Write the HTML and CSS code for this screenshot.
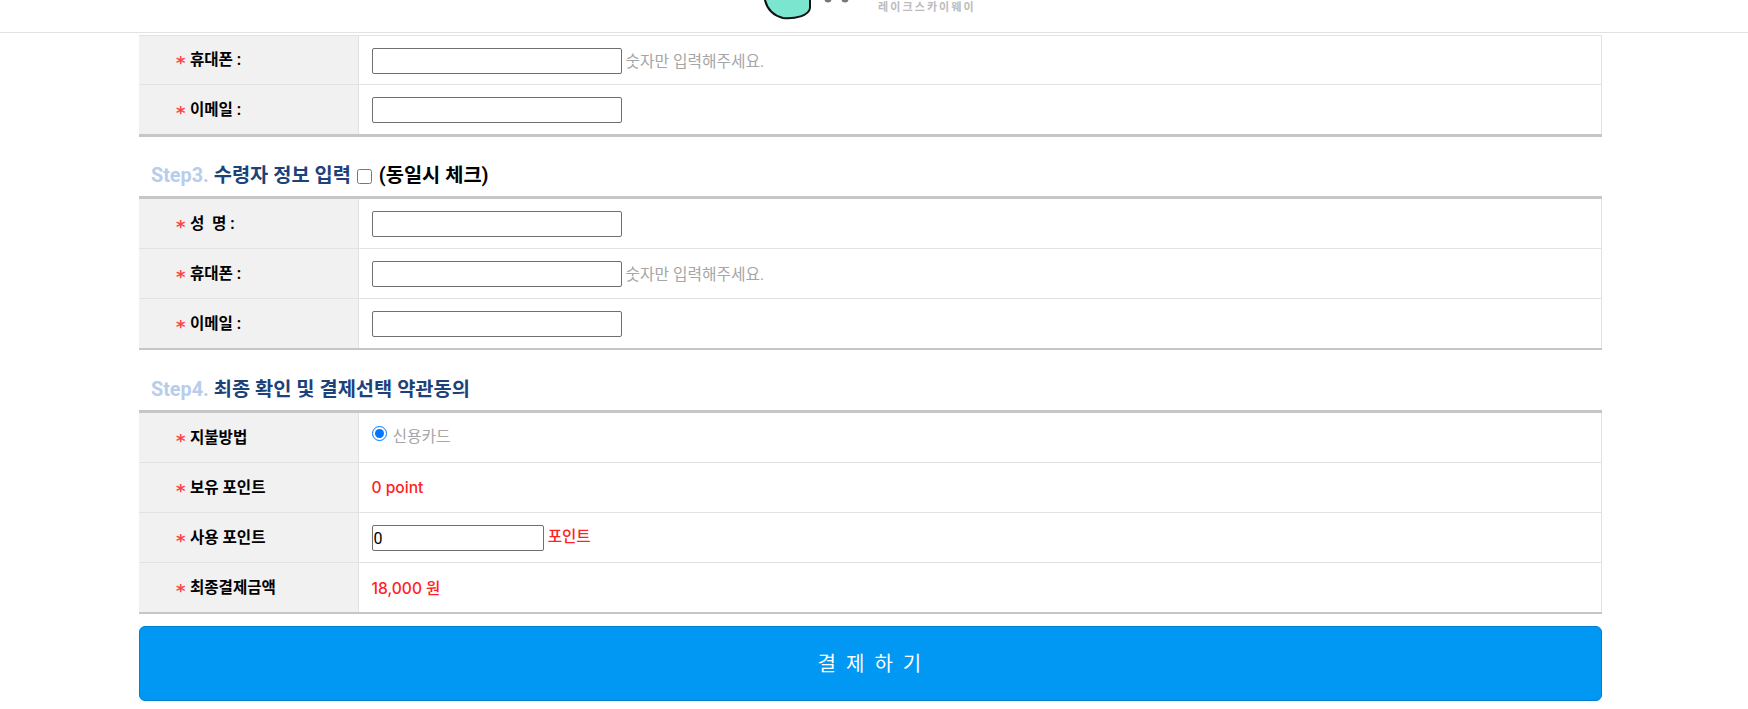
FILE: index.html
```html
<!DOCTYPE html>
<html lang="ko">
<head>
    <meta charset="UTF-8">
    <meta name="viewport" content="width=device-width, initial-scale=1.0">
    <title>결제하기</title>
    <link rel="stylesheet" href="styles.css">
</head>
<body>

<header class="top">
    <svg class="logo" width="100" height="20" viewBox="0 0 100 20">
        <path d="M1 -6 C2 6 8 15 20 18 C32 19 46 16 47 8 L47 -6 Z" fill="#7be5cf" stroke="#111" stroke-width="2"/>
        <circle cx="65" cy="-1" r="3.5" fill="#777"/>
        <circle cx="82" cy="-1" r="3.5" fill="#777"/>
    </svg>
    <span class="brand">레이크스카이웨이</span>
</header>

<div class="container">
    <table class="form">
        <tr>
            <th><span class="req">*</span> 휴대폰 :</th>
            <td><input type="text" class="field"> <span class="hint">숫자만 입력해주세요.</span></td>
        </tr>
        <tr>
            <th><span class="req">*</span> 이메일 :</th>
            <td><input type="text" class="field"></td>
        </tr>
    </table>

    <h2 class="step"><span class="num">Step3.</span> 수령자 정보 입력 <input type="checkbox" class="same"> <span class="same-label">(동일시 체크)</span></h2>
    <table class="form">
        <tr>
            <th><span class="req">*</span> 성 &nbsp;명 :</th>
            <td><input type="text" class="field"></td>
        </tr>
        <tr>
            <th><span class="req">*</span> 휴대폰 :</th>
            <td><input type="text" class="field"> <span class="hint">숫자만 입력해주세요.</span></td>
        </tr>
        <tr>
            <th><span class="req">*</span> 이메일 :</th>
            <td><input type="text" class="field"></td>
        </tr>
    </table>

    <h2 class="step"><span class="num">Step4.</span> 최종 확인 및 결제선택 약관동의</h2>
    <table class="form">
        <tr>
            <th><span class="req">*</span> 지불방법</th>
            <td class="pay-cell"><input type="radio" class="pay" name="pay" checked> <span class="hint">신용카드</span></td>
        </tr>
        <tr>
            <th><span class="req">*</span> 보유 포인트</th>
            <td class="red">0 point</td>
        </tr>
        <tr>
            <th><span class="req">*</span> 사용 포인트</th>
            <td class="red"><input type="text" class="field point" value="0"> 포인트</td>
        </tr>
        <tr>
            <th><span class="req">*</span> 최종결제금액</th>
            <td class="red">18,000 원</td>
        </tr>
    </table>

    <button class="pay-btn">결 제 하 기</button>
</div>

</body>
</html>
```

FILE: styles.css
```css
html, body {
    height: 709px;
    overflow: hidden;
}
body {
    margin: 0;
    background-color: #fff;
    font-family: Roboto, "Noto Sans CJK KR", sans-serif;
    font-size: 15.6px;
    color: #000;
}
.top {
    height: 32px;
    border-bottom: 1px solid #e2e2e6;
    display: flex;
    align-items: flex-start;
    padding-left: 763px;
}
.logo {
    display: block;
    flex: none;
}
.brand {
    margin: 0 0 0 15px;
    font-size: 11px;
    line-height: 16px;
    font-weight: 700;
    letter-spacing: 2.1px;
    color: #bbb;
}
.container {
    width: 1463px;
    margin: 2px 0 0 139px;
}
.form {
    width: 100%;
    border-collapse: collapse;
    border-top: 3px solid #c6c6c6;
    border-bottom: 2px solid #c6c6c6;
    table-layout: fixed;
}
.form:first-child {
    border-top: 1px solid #e2e2e2;
    border-bottom-width: 3px;
    margin-bottom: -1px;
}
.form th, .form td {
    height: 48px;
    padding: 0 0 1px;
    border-bottom: 1px solid #e2e2e2;
}
.form:first-child tr:first-child th, .form:first-child tr:first-child td {
    height: 47px;
}
.form tr:last-child th, .form tr:last-child td {
    border-bottom: 0;
}
.form th {
    width: 219px;
    box-sizing: border-box;
    background-color: #f1f1f1;
    border-right: 1px solid #e2e2e2;
    padding-left: 37px;
    text-align: left;
    font-weight: 700;
}
.form td {
    padding-left: 13px;
    border-right: 1px solid #e2e2e2;
}
.form td.pay-cell {
    height: 44px;
    padding-bottom: 5px;
}
.req {
    display: inline-block;
    width: 10px;
    font-family: "DejaVu Sans", sans-serif;
    font-size: 18px;
    font-weight: 700;
    line-height: 1;
    color: #f44;
    vertical-align: -4px;
}
.field {
    width: 250px;
    height: 26px;
    margin: 1px 0 -1px;
    box-sizing: border-box;
    padding: 1px;
    border: 1px solid #6f6f6f;
    border-radius: 2px;
    font-family: Roboto, sans-serif;
    font-size: 16px;
    vertical-align: middle;
}
.field.point {
    width: 172px;
}
.hint {
    font-size: 15.8px;
    color: #a6a6a6;
    vertical-align: middle;
}
.red {
    font-family: Inter, "Noto Sans CJK KR", sans-serif;
    color: #f22;
    font-weight: 500;
}
.pay {
    width: 15px;
    height: 15px;
    margin: 0 2px 0 0;
    accent-color: #0075ff;
    vertical-align: -2px;
}
.step {
    margin: 0;
    height: 60px;
    padding: 25px 0 0 12px;
    box-sizing: border-box;
    font-size: 19.8px;
    line-height: 30px;
    font-weight: 700;
    color: #1d4279;
}
.num {
    color: #b6cdec;
}
.same {
    width: 15px;
    height: 15px;
    margin: 0 2px 0 1px;
    vertical-align: middle;
}
.same-label {
    color: #000;
}
.pay-btn {
    display: block;
    width: 100%;
    height: 75px;
    margin-top: 12px;
    padding-bottom: 4px;
    background-color: #0098f2;
    border: 1px solid #0080d0;
    border-radius: 6px;
    color: #fff;
    font-family: "Noto Sans CJK KR", sans-serif;
    font-size: 20px;
    letter-spacing: 2.2px;
}
```
